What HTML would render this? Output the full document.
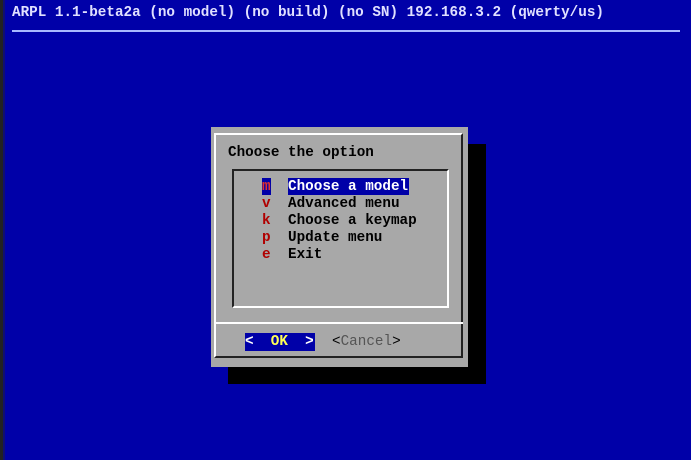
<!DOCTYPE html>
<html><head><style>
*{margin:0;padding:0}
body{width:691px;height:460px;background:#0000a8;position:relative;overflow:hidden;font-family:"Liberation Mono",monospace;font-size:14.3px;font-weight:bold;line-height:17px}
.a{position:absolute;white-space:pre}
</style></head><body>
<div class="a" style="left:0;top:0;width:3px;height:460px;background:#222"></div>
<div class="a" style="left:3px;top:0;width:2px;height:460px;background:#101070"></div>
<div class="a" style="left:12px;top:5px;color:#e0e0ff">ARPL 1.1-beta2a (no model) (no build) (no SN) 192.168.3.2 (qwerty/us)</div>
<div class="a" style="left:12px;top:30px;width:668px;height:2px;background:#a8b8ff"></div>
<div class="a" style="left:228px;top:144px;width:258px;height:240px;background:#000"></div>
<div class="a" style="left:211px;top:127px;width:257px;height:240px;background:#a8a8a8"></div>
<div class="a" style="left:214px;top:133px;width:249px;height:225px;border-left:2px solid #fff;border-top:2px solid #fff;border-right:2px solid #222;border-bottom:2px solid #222;box-sizing:border-box"></div>
<div class="a" style="left:215px;top:322px;width:248px;height:2px;background:#fff"></div>
<div class="a" style="left:228px;top:145px;color:#000">Choose the option</div>
<div class="a" style="left:232px;top:169px;width:217px;height:139px;border-left:2px solid #222;border-top:2px solid #222;border-right:2px solid #fff;border-bottom:2px solid #fff;box-sizing:border-box"></div>
<div class="a" style="left:288px;top:178px;width:121px;height:17px;background:#0000a8"></div>
<div class="a" style="left:262px;top:178px;width:9px;height:17px;background:#0000a8"></div>
<div class="a" style="left:262px;top:179px;color:#e03030">m
<span style="color:#b00000">v
k
p
e</span></div>
<div class="a" style="left:288px;top:179px;color:#000"><span style="color:#fff">Choose a model</span>
Advanced menu
Choose a keymap
Update menu
Exit</div>
<div class="a" style="left:245px;top:333px;width:70px;height:18px;background:#0000a8"></div>
<div class="a" style="left:245px;top:334px;color:#fff">&lt;  <span style="color:#ffff55">OK</span>  &gt;</div>
<div class="a" style="left:332px;top:334px;color:#000;font-weight:normal">&lt;<span style="color:#555">Cancel</span>&gt;</div>
</body></html>
